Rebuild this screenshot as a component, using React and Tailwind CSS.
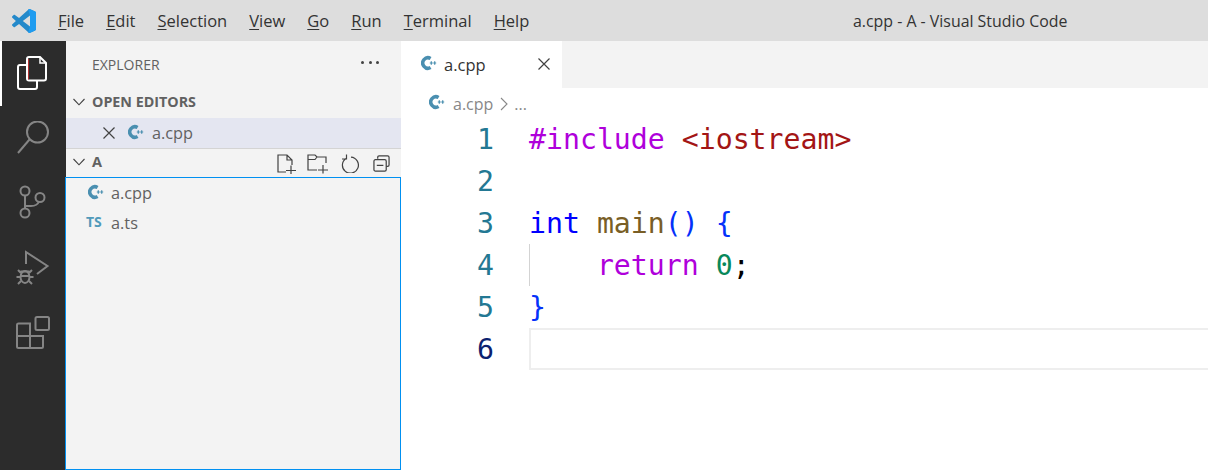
const ui = { fontFamily: '"Open Sans", "Noto Sans", sans-serif' };

// VS Code logo
const Logo = () => (
  <svg viewBox="0 0 100 100" className="w-[24px] h-[24px]">
    <path
      fill="#2489ca"
      fillRule="evenodd"
      d="M70.900 99.300c1.600.6 3.400.6 5-.2l20.600-9.900c2.100-1 3.500-3.200 3.500-5.600V16.400c0-2.400-1.400-4.600-3.500-5.600L75.900.9c-2.100-1-4.600-.8-6.400.5-.3.2-.5.4-.7.7L29.400 38 12.200 25c-1.600-1.200-3.800-1.100-5.300.2l-5.500 5c-1.800 1.700-1.800 4.500 0 6.200L16.200 50 1.400 63.600c-1.800 1.600-1.800 4.500 0 6.100l5.500 5c1.500 1.400 3.700 1.500 5.300.3L29.400 62l39.400 36c.6.6 1.300 1 2.100 1.300zM75 27.300 45.100 50 75 72.700V27.300z"
    />
    <path
      fill="#1f9cf0"
      d="M75.900 99.100l20.600-9.900c2.100-1 3.500-3.200 3.500-5.600V16.400c0-2.400-1.400-4.600-3.500-5.600L75.900.9c-2.100-1-4.600-.8-6.400.5-.9.6-1.600 1.400-2 2.200L75 27.300v45.400l-7.500 23.700c.4.8 1.100 1.600 2 2.200 1.800 1.300 4.300 1.500 6.400.5z"
    />
  </svg>
);

const CppIcon = ({ className }) => (
  <svg viewBox="0 0 16 16" className={className} fill="none" stroke="#4a8fb0">
    <path d="M9.600 3.500A5.200 5.200 0 1 0 9.600 12.500" strokeWidth="3.500" />
    <path d="M8.800 8h3M10.300 6.300v3.400M12.200 8h3M13.700 6.300v3.400" strokeWidth="1.200" />
  </svg>
);

const Chevron = () => (
  <svg viewBox="0 0 12 8" className="w-[12px] h-[8px]" fill="none" stroke="#424242" strokeWidth="1.100">
    <path d="M.5 1 6 6.800 11.500 1" />
  </svg>
);

const CloseIcon = ({ color = "#424242" }) => (
  <svg viewBox="0 0 12 12" className="w-[12px] h-[12px]" fill="none" stroke={color} strokeWidth="1.200">
    <path d="M.5.5l11 11M11.500.5l-11 11" />
  </svg>
);

const FilesIcon = () => (
  <svg viewBox="0 0 36 36" className="w-[36px] h-[36px]" fill="none" stroke="#ffffff" strokeWidth="2">
    <path d="M11 9H4Q2 9 2 11V31q0 2 2 2H19q2 0 2-2V24.500" />
    <path d="M11 3q0-2 2-2H24l6 6V22.500q0 2-2 2H13q-2 0-2-2z" />
    <path d="M24 1V7h6" strokeWidth="1.500" />
    <path d="M12.500 3V23.500" stroke="#b03030" strokeWidth="1" />
  </svg>
);

const SearchIcon = () => (
  <svg viewBox="0 0 36 36" className="w-[36px] h-[36px]" fill="none" stroke="#858585" strokeWidth="2">
    <circle cx="22.500" cy="11" r="10.500" />
    <path d="M14.500 18.500 3 32" />
  </svg>
);

const BranchIcon = () => (
  <svg viewBox="0 0 36 36" className="w-[36px] h-[36px]" fill="none" stroke="#858585" strokeWidth="2">
    <circle cx="10" cy="7" r="4.500" />
    <circle cx="10" cy="29" r="4.500" />
    <circle cx="25" cy="13.500" r="4.500" />
    <path d="M10 11.500v13M10 22h6c4 0 7-2 8-4.500" />
  </svg>
);

const DebugIcon = () => (
  <svg viewBox="0 0 36 36" className="w-[36px] h-[36px]" fill="none" stroke="#858585" strokeWidth="2">
    <path d="M11 14V2l21.500 14-10.500 8" />
    <ellipse cx="10" cy="27" rx="4.500" ry="6" />
    <path d="M5.500 21.500h9M3 20l3 3M17 20l-3 3M1.500 27h4M14.500 27h4M3 34l3-3M17 34l-3-3M5.500 26h9" />
  </svg>
);

const ExtensionsIcon = () => (
  <svg viewBox="0 0 36 36" className="w-[36px] h-[36px]" fill="none" stroke="#858585" strokeWidth="2">
    <rect x="20.500" y="2" width="13.500" height="13" rx="1.500" />
    <path d="M15 8.500H3.500Q2 8.500 2 10V31.500Q2 33 3.500 33H26.500Q28 33 28 31.500V21H15zM2 21h13M15 21v12" />
  </svg>
);

const NewFileIcon = () => (
  <svg viewBox="0 0 20 21" className="w-[20px] h-[21px]" fill="none" stroke="#424242" strokeWidth="1.200">
    <path d="M9 19H1V2h9l5 5v5M10 2v5h5M9 17.500h10M14 12.500v8.500" />
  </svg>
);

const NewFolderIcon = () => (
  <svg viewBox="0 0 22 21" className="w-[22px] h-[21px]" fill="none" stroke="#424242" strokeWidth="1.200">
    <path d="M10 17H1V2h7l2 2h9v6M1 6.500h7l2-2.500M11 17h10M16 12v8.500" />
  </svg>
);

const RefreshIcon = () => (
  <svg viewBox="0 0 18 20" className="w-[18px] h-[20px]" fill="none" stroke="#424242" strokeWidth="1.200">
    <path d="M5 5.500A8 8 0 1 0 10 4.200M5.500 1.500v4.500H1" />
  </svg>
);

const CollapseIcon = () => (
  <svg viewBox="0 0 18 18" className="w-[17px] h-[17px]" fill="none" stroke="#424242" strokeWidth="1.300">
    <path d="M5 4V2.500Q5 1 6.500 1h9Q17 1 17 2.500v8q0 1.500-1.500 1.500H14" />
    <rect x="1" y="5" width="13" height="12" rx="1.500" />
    <path d="M4 11h7" />
  </svg>
);

const menus = [
  ["F", "ile"],
  ["E", "dit"],
  ["S", "election"],
  ["V", "iew"],
  ["G", "o"],
  ["R", "un"],
  ["T", "erminal"],
  ["H", "elp"],
];

const code = [
  [["#include ", "text-[#af00db]"], ["<iostream>", "text-[#a31515]"]],
  [],
  [
    ["int ", "text-[#0000ff]"],
    ["main", "text-[#795e26]"],
    ["()", "text-[#0431fa]"],
    [" ", ""],
    ["{", "text-[#0431fa]"],
  ],
  [["    ", ""], ["return ", "text-[#af00db]"], ["0", "text-[#09885a]"], [";", "text-black"]],
  [["}", "text-[#0431fa]"]],
  [],
];

export default function App() {
  return (
    <div className="w-[1208px] h-[470px] overflow-hidden flex flex-col bg-white" style={ui}>
      {/* title bar */}
      <div className="h-[41px] shrink-0 bg-[#dddddd] flex items-center text-[16.5px] text-[#333333]">
        <div className="w-[58px] pl-[12px] shrink-0">
          <Logo />
        </div>
        <div className="flex gap-[22px] w-[640px] pt-[2px]">
          {menus.map(([k, rest]) => (
            <span key={k}>
              <span className="underline underline-offset-2">{k}</span>
              {rest}
            </span>
          ))}
        </div>
        <span className="ml-[155px] pt-[2px] text-[15.9px]">a.cpp - A - Visual Studio Code</span>
      </div>

      <div className="flex flex-1 min-h-0">
        {/* activity bar */}
        <div className="w-[66px] shrink-0 bg-[#2c2c2c] flex flex-col">
          <div className="h-[65px] flex items-center justify-center border-l-2 border-white">
            <FilesIcon />
          </div>
          <div className="h-[66px] flex items-center justify-center"><SearchIcon /></div>
          <div className="h-[66px] flex items-center justify-center -mt-[3px]"><BranchIcon /></div>
          <div className="h-[66px] flex items-center justify-center"><DebugIcon /></div>
          <div className="h-[66px] flex items-center justify-center -mt-[1px]"><ExtensionsIcon /></div>
        </div>

        {/* sidebar */}
        <div className="w-[335px] shrink-0 bg-[#f3f3f3] flex flex-col text-[#616161]">
          <div className="h-[47px] flex items-center justify-between pl-[26px] pr-[22px] text-[14px] pb-[1px]">
            <span>EXPLORER</span>
            <span className="flex gap-[4.500px] -mt-[3px]">
              <i className="w-[3px] h-[3px] rounded-full bg-[#424242]" />
              <i className="w-[3px] h-[3px] rounded-full bg-[#424242]" />
              <i className="w-[3px] h-[3px] rounded-full bg-[#424242]" />
            </span>
          </div>
          <div className="h-[30px] flex items-center gap-[7px] pl-[7px] pb-[3px] text-[14.300px] font-bold">
            <Chevron />
            <span>OPEN EDITORS</span>
          </div>
          <div className="h-[31px] bg-[#e4e6f1] border-b border-[#d4d4d4] flex items-center pl-[37px] text-[16.300px]">
            <CloseIcon />
            <CppIcon className="w-[16px] h-[16px] ml-[13px] -mt-[2px]" />
            <span className="ml-[8px]">a.cpp</span>
          </div>
          <div className="h-[28px] flex items-center pl-[7px] pr-[11px] text-[14.500px] font-bold">
            <div className="-mt-[2px] flex items-center">
              <Chevron />
              <span className="ml-[7px]">A</span>
            </div>
            <div className="ml-auto flex items-center">
              <NewFileIcon />
              <div className="ml-[10px]"><NewFolderIcon /></div>
              <div className="ml-[12px]"><RefreshIcon /></div>
              <div className="ml-[14px]"><CollapseIcon /></div>
            </div>
          </div>
          <div className="flex-1 -ml-px border border-[#0090f1] text-[16.300px]">
            <div className="h-[30px] flex items-center pl-[22px]">
              <CppIcon className="w-[16px] h-[16px] -mt-[3px]" />
              <span className="ml-[7px]">a.cpp</span>
            </div>
            <div className="h-[30px] flex items-center pl-[20px]">
              <span className="w-[18px] text-[14px] font-bold text-[#519aba] -mt-[4px]">TS</span>
              <span className="ml-[7px]">a.ts</span>
            </div>
          </div>
        </div>

        {/* editor */}
        <div className="flex-1 min-w-0 flex flex-col">
          <div className="h-[47px] shrink-0 bg-[#f3f3f3] flex">
            <div className="w-[161px] bg-white flex items-center pl-[20px] text-[16.500px] text-[#333333]">
              <CppIcon className="w-[16px] h-[16px] -mt-[3px]" />
              <span className="ml-[7px] pt-[2px]">a.cpp</span>
              <div className="ml-auto mr-[12px] -mt-[2px]"><CloseIcon /></div>
            </div>
          </div>
          <div className="h-[30px] shrink-0 flex items-center pl-[28px] pt-[1px] text-[16px] text-[#888888]">
            <CppIcon className="w-[16px] h-[16px] -mt-[3px]" />
            <span className="ml-[8px]">a.cpp</span>
            <svg viewBox="0 0 8 14" className="w-[8px] h-[14px] ml-[7px]" fill="none" stroke="#888888" strokeWidth="1.100">
              <path d="M1 1l6 6-6 6" />
            </svg>
            <span className="ml-[6px]">...</span>
          </div>
          <div className="flex-1 text-[28.200px] whitespace-pre" style={{ fontFamily: '"DejaVu Sans Mono", monospace' }}>
            {code.map((tokens, i) => (
              <div key={i} className="h-[42px] flex leading-[44px]">
                <div className={`w-[93px] shrink-0 text-right ${i === 5 ? "text-[#0b216f]" : "text-[#237893]"}`}>
                  {i + 1}
                </div>
                <div
                  className={`flex-1 ml-[35px] ${i === 5 ? "border-2 border-r-0 border-[#eeeeee]" : ""} ${
                    i === 3 ? "shadow-[inset_1px_0_0_#d3d3d3]" : ""
                  }`}
                >
                  {tokens.map(([t, c], j) => (
                    <span key={j} className={c}>{t}</span>
                  ))}
                </div>
              </div>
            ))}
          </div>
        </div>
      </div>
    </div>
  );
}
